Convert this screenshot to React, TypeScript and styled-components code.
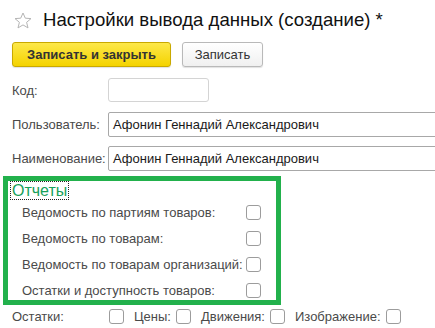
import React from "react";
import styled, { createGlobalStyle } from "styled-components";

const Global = createGlobalStyle`
  html, body { margin: 0; padding: 0; background: #fff; overflow: hidden; }
  body { font-family: "Liberation Sans", Arial, sans-serif; width: 435px; height: 328px; }
`;

const Page = styled.div`
  width: 435px;
  height: 328px;
  overflow: hidden;
  display: flex;
  flex-direction: column;
`;

const Header = styled.div`
  display: flex;
  align-items: center;
  gap: 11px;
  padding: 9px 0 0 14px;
  height: 22px;
`;

const Title = styled.h1`
  margin: 0;
  font-size: 18.6px;
  line-height: 22px;
  font-weight: normal;
  color: #111;
`;

const Toolbar = styled.div`
  display: flex;
  gap: 11px;
  margin: 11px 0 0 12px;
`;

const Button = styled.button<{ $primary?: boolean }>`
  height: 25px;
  box-sizing: border-box;
  padding: 0;
  font-family: "Liberation Sans", Arial, sans-serif;
  font-size: 13px;
  font-weight: ${(p) => (p.$primary ? "bold" : "normal")};
  color: #333;
  border-radius: 3px;
  border: 1px solid ${(p) => (p.$primary ? "#c9a900" : "#b9b9b9")};
  background: ${(p) =>
    p.$primary
      ? "linear-gradient(#fde84a, #f4d300)"
      : "linear-gradient(#ffffff, #f0f0f0)"};
  box-shadow: 0 1px 1px rgba(0, 0, 0, 0.12);
  width: ${(p) => (p.$primary ? "159px" : "81px")};
`;

const Form = styled.div`
  display: flex;
  flex-direction: column;
  gap: 10px;
  margin: 11px 0 0 12px;
`;

const FormRow = styled.div`
  display: flex;
  align-items: center;
  height: 24px;
`;

const Label = styled.span<{ $w?: number }>`
  font-size: 13px;
  color: #4a4a4a;
  white-space: nowrap;
  ${(p) => (p.$w ? `width: ${p.$w}px; flex: none;` : "")}
`;

const Input = styled.div<{ $light?: boolean; $w: number }>`
  box-sizing: border-box;
  height: ${(p) => (p.$light ? "24px" : "25px")};
  width: ${(p) => p.$w}px;
  flex: none;
  border: 1px solid ${(p) => (p.$light ? "#d4d4d4" : "#a8a8a8")};
  border-radius: ${(p) => (p.$light ? "3px" : "2px")};
  padding: 0 4px;
  display: flex;
  align-items: center;
  font-size: 13px;
  color: #1a1a1a;
  white-space: nowrap;
`;

const GroupBox = styled.div`
  margin: 6px 0 0 3px;
  width: 278px;
  box-sizing: border-box;
  border: 5px solid #22b14c;
  padding: 1px 0 1px 3px;
  display: flex;
  flex-direction: column;
`;

const GroupTitle = styled.span`
  align-self: flex-start;
  font-size: 16px;
  line-height: 17px;
  color: #17a05a;
  outline: 1px dotted #222;
  padding: 0 1px;
`;

const CheckList = styled.div`
  display: flex;
  flex-direction: column;
  gap: 8px;
  padding: 4px 0 0 11px;
`;

const CheckRow = styled.div`
  display: flex;
  align-items: center;
  justify-content: space-between;
  height: 18px;
  width: 239px;
`;

const Box = styled.span`
  display: inline-block;
  width: 15px;
  height: 15px;
  box-sizing: border-box;
  border: 1px solid #9c9c9c;
  border-radius: 3px;
  background: #fff;
  flex: none;
`;

const BottomRow = styled.div`
  display: flex;
  align-items: center;
  height: 18px;
  margin: 2px 0 0 12px;
`;

const Pair = styled.div`
  display: flex;
  align-items: center;
  gap: 5px;
  margin-right: 10px;
`;

const Star = () => (
  <svg width="18" height="17" viewBox="0 0 18 17">
    <path
      d="M9 1 L11.3 6.2 L17 6.6 L12.6 10.3 L14 15.9 L9 12.9 L4 15.9 L5.4 10.3 L1 6.6 L6.7 6.2 Z"
      fill="#fff"
      stroke="#b5b5b5"
      strokeWidth="1"
      strokeLinejoin="round"
    />
  </svg>
);

const reports = [
  "Ведомость по партиям товаров:",
  "Ведомость по товарам:",
  "Ведомость по товарам организаций:",
  "Остатки и доступность товаров:",
];

export default function App() {
  return (
    <Page>
      <Global />
      <Header>
        <Star />
        <Title>Настройки вывода данных (создание) *</Title>
      </Header>
      <Toolbar>
        <Button $primary>Записать и закрыть</Button>
        <Button>Записать</Button>
      </Toolbar>
      <Form>
        <FormRow>
          <Label $w={96}>Код:</Label>
          <Input $light $w={101} />
        </FormRow>
        <FormRow>
          <Label $w={96}>Пользователь:</Label>
          <Input $w={360}>Афонин Геннадий Александрович</Input>
        </FormRow>
        <FormRow>
          <Label $w={96}>Наименование:</Label>
          <Input $w={360}>Афонин Геннадий Александрович</Input>
        </FormRow>
      </Form>
      <GroupBox>
        <GroupTitle>Отчеты</GroupTitle>
        <CheckList>
          {reports.map((r) => (
            <CheckRow key={r}>
              <Label>{r}</Label>
              <Box />
            </CheckRow>
          ))}
        </CheckList>
      </GroupBox>
      <BottomRow>
        <Pair>
          <Label $w={92}>Остатки:</Label>
          <Box />
        </Pair>
        <Pair>
          <Label>Цены:</Label>
          <Box />
        </Pair>
        <Pair>
          <Label>Движения:</Label>
          <Box />
        </Pair>
        <Pair>
          <Label>Изображение:</Label>
          <Box />
        </Pair>
      </BottomRow>
    </Page>
  );
}
